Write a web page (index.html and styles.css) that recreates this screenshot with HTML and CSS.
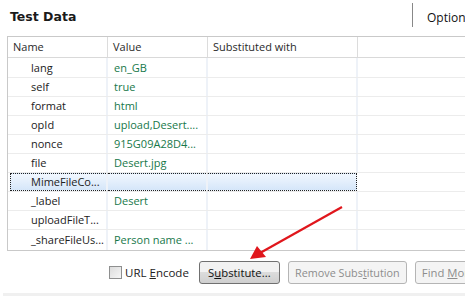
FILE: index.html
```html
<!DOCTYPE html>
<html lang="en">
<head>
  <meta charset="UTF-8">
  <title>Test Data</title>
  <link rel="stylesheet" href="styles.css">
</head>
<body>
  <div class="page">
    <div class="top">
      <h1 class="title">Test Data</h1>
      <div class="tab">Option</div>
    </div>

    <div class="grid">
      <div class="row head">
        <div class="cell">Name</div>
        <div class="cell">Value</div>
        <div class="cell">Substituted with</div>
        <div class="cell"></div>
      </div>
      <div class="row"><div class="cell name">lang</div><div class="cell val">en_GB</div><div class="cell"></div><div class="cell"></div></div>
      <div class="row"><div class="cell name">self</div><div class="cell val">true</div><div class="cell"></div><div class="cell"></div></div>
      <div class="row"><div class="cell name">format</div><div class="cell val">html</div><div class="cell"></div><div class="cell"></div></div>
      <div class="row"><div class="cell name">opId</div><div class="cell val">upload,Desert....</div><div class="cell"></div><div class="cell"></div></div>
      <div class="row"><div class="cell name">nonce</div><div class="cell val">915G09A28D4...</div><div class="cell"></div><div class="cell"></div></div>
      <div class="row"><div class="cell name">file</div><div class="cell val">Desert.jpg</div><div class="cell"></div><div class="cell"></div></div>
      <div class="row selected"><div class="cell name">MimeFileCo...</div><div class="cell val"></div><div class="cell"></div><div class="cell"></div></div>
      <div class="row"><div class="cell name">_label</div><div class="cell val">Desert</div><div class="cell"></div><div class="cell"></div></div>
      <div class="row"><div class="cell name">uploadFileT...</div><div class="cell val"></div><div class="cell"></div><div class="cell"></div></div>
      <div class="row"><div class="cell name">_shareFileUs...</div><div class="cell val">Person name ...</div><div class="cell"></div><div class="cell"></div></div>
    </div>

    <div class="actions">
      <label class="check"><span class="box"></span><span>URL <u>E</u>ncode</span></label>
      <button class="btn sub">S<u>u</u>bstitute...</button>
      <button class="btn off remove">Remove Subs<u>t</u>itution</button>
      <button class="btn off">Find <u>M</u>ore</button>
    </div>
    <div class="strip"></div>

    <!-- annotation arrow -->
    <svg class="arrow" width="465" height="296" viewBox="0 0 465 296">
      <line x1="342" y1="207" x2="260" y2="253" stroke="#e0161c" stroke-width="2.2"/>
      <polygon points="250,259 257,246 266,257" fill="#e0161c"/>
    </svg>
  </div>
</body>
</html>
```

FILE: styles.css
```css
body {
  margin: 0;
  background: #fff;
  font-family: "Open Sans", "DejaVu Sans", sans-serif;
  font-size: 11px;
  color: #222;
}
.page {
  position: relative;
  width: 465px;
  height: 296px;
  overflow: hidden;
}
.top {
  display: flex;
  align-items: center;
  height: 36px;
}
.title {
  flex: 1;
  margin: 0;
  padding-left: 10px;
  font-family: "DejaVu Sans", sans-serif;
  font-size: 12.5px;
  font-weight: bold;
  color: #1a1a1a;
  position: relative;
  top: -2px;
}
.tab {
  height: 24px;
  margin-top: -6px;
  border-left: 1px solid #888;
  padding-left: 14px;
  line-height: 30px;
  font-size: 12px;
  width: 38px;
  white-space: nowrap;
  color: #111;
}
.grid {
  margin-left: 7px;
  border: 1px solid #c9c9c9;
  border-right: none;
}
.row {
  display: grid;
  grid-template-columns: 100px 100px 150px 1fr;
  height: 19px;
  border-bottom: 1px solid #ececec;
  box-sizing: border-box;
}
.row:nth-child(2),
.row:last-child {
  height: 20px;
}
.row:last-child {
  border-bottom: none;
}
.row.head {
  height: 21px;
  border-bottom: 1px solid #d9d9d9;
}
.cell {
  line-height: 18px;
  white-space: nowrap;
  overflow: hidden;
  border-right: 2px solid #eef2f8;
}
.row:nth-child(2) .cell,
.row:last-child .cell {
  line-height: 19px;
}
.head .cell {
  line-height: 20px;
  padding-left: 5px;
  border-right: 1px solid #dcdcdc;
  color: #2a2a2a;
}
.cell.name {
  padding-left: 23px;
}
.cell.val {
  padding-left: 6px;
  color: #17784a;
}
.cell:last-child {
  border-right: none;
}
.row.selected {
  grid-template-columns: 98px 100px 149px 1fr;
  padding-left: 2px;
}
.row.selected .cell:not(:last-child) {
  background: linear-gradient(#f1f7fe, #d5e6f9);
  border-top: 1px dotted #222;
  border-bottom: 1px dotted #222;
  line-height: 16px;
}
.row.selected .cell.name {
  border-left: 1px dotted #222;
  padding-left: 20px;
}
.row.selected .cell:nth-child(3) {
  border-right: 1px dotted #222;
}
.actions {
  display: flex;
  align-items: center;
  gap: 8px;
  padding-left: 109px;
  margin-top: 10px;
  white-space: nowrap;
}
.check {
  display: flex;
  align-items: center;
  gap: 3px;
  font-size: 11.5px;
  margin-right: 2px;
  color: #222;
}
.box {
  width: 11px;
  height: 11px;
  border: 1px solid #8e8f8f;
  background: linear-gradient(135deg, #dcdcdc, #f6f6f6);
}
.btn {
  height: 23px;
  padding: 0 6px;
  font-family: inherit;
  font-size: 11.3px;
  color: #111;
  border: 1px solid #707070;
  border-radius: 3px;
  background: linear-gradient(#f2f2f2 50%, #dcdcdc 50%, #cfcfcf);
  flex-shrink: 0;
}
.btn.sub {
  width: 81px;
}
.btn.remove {
  width: 119px;
  font-size: 10.8px;
  padding: 0 4px;
}
.btn.off {
  color: #8d8d8d;
  border-color: #b5b5b5;
  background: #f4f4f4;
}
.strip {
  margin: 9px 0 0 3px;
  height: 6px;
  background: #f0f0f0;
}
.arrow {
  position: absolute;
  left: 0;
  top: 0;
  pointer-events: none;
}
```
